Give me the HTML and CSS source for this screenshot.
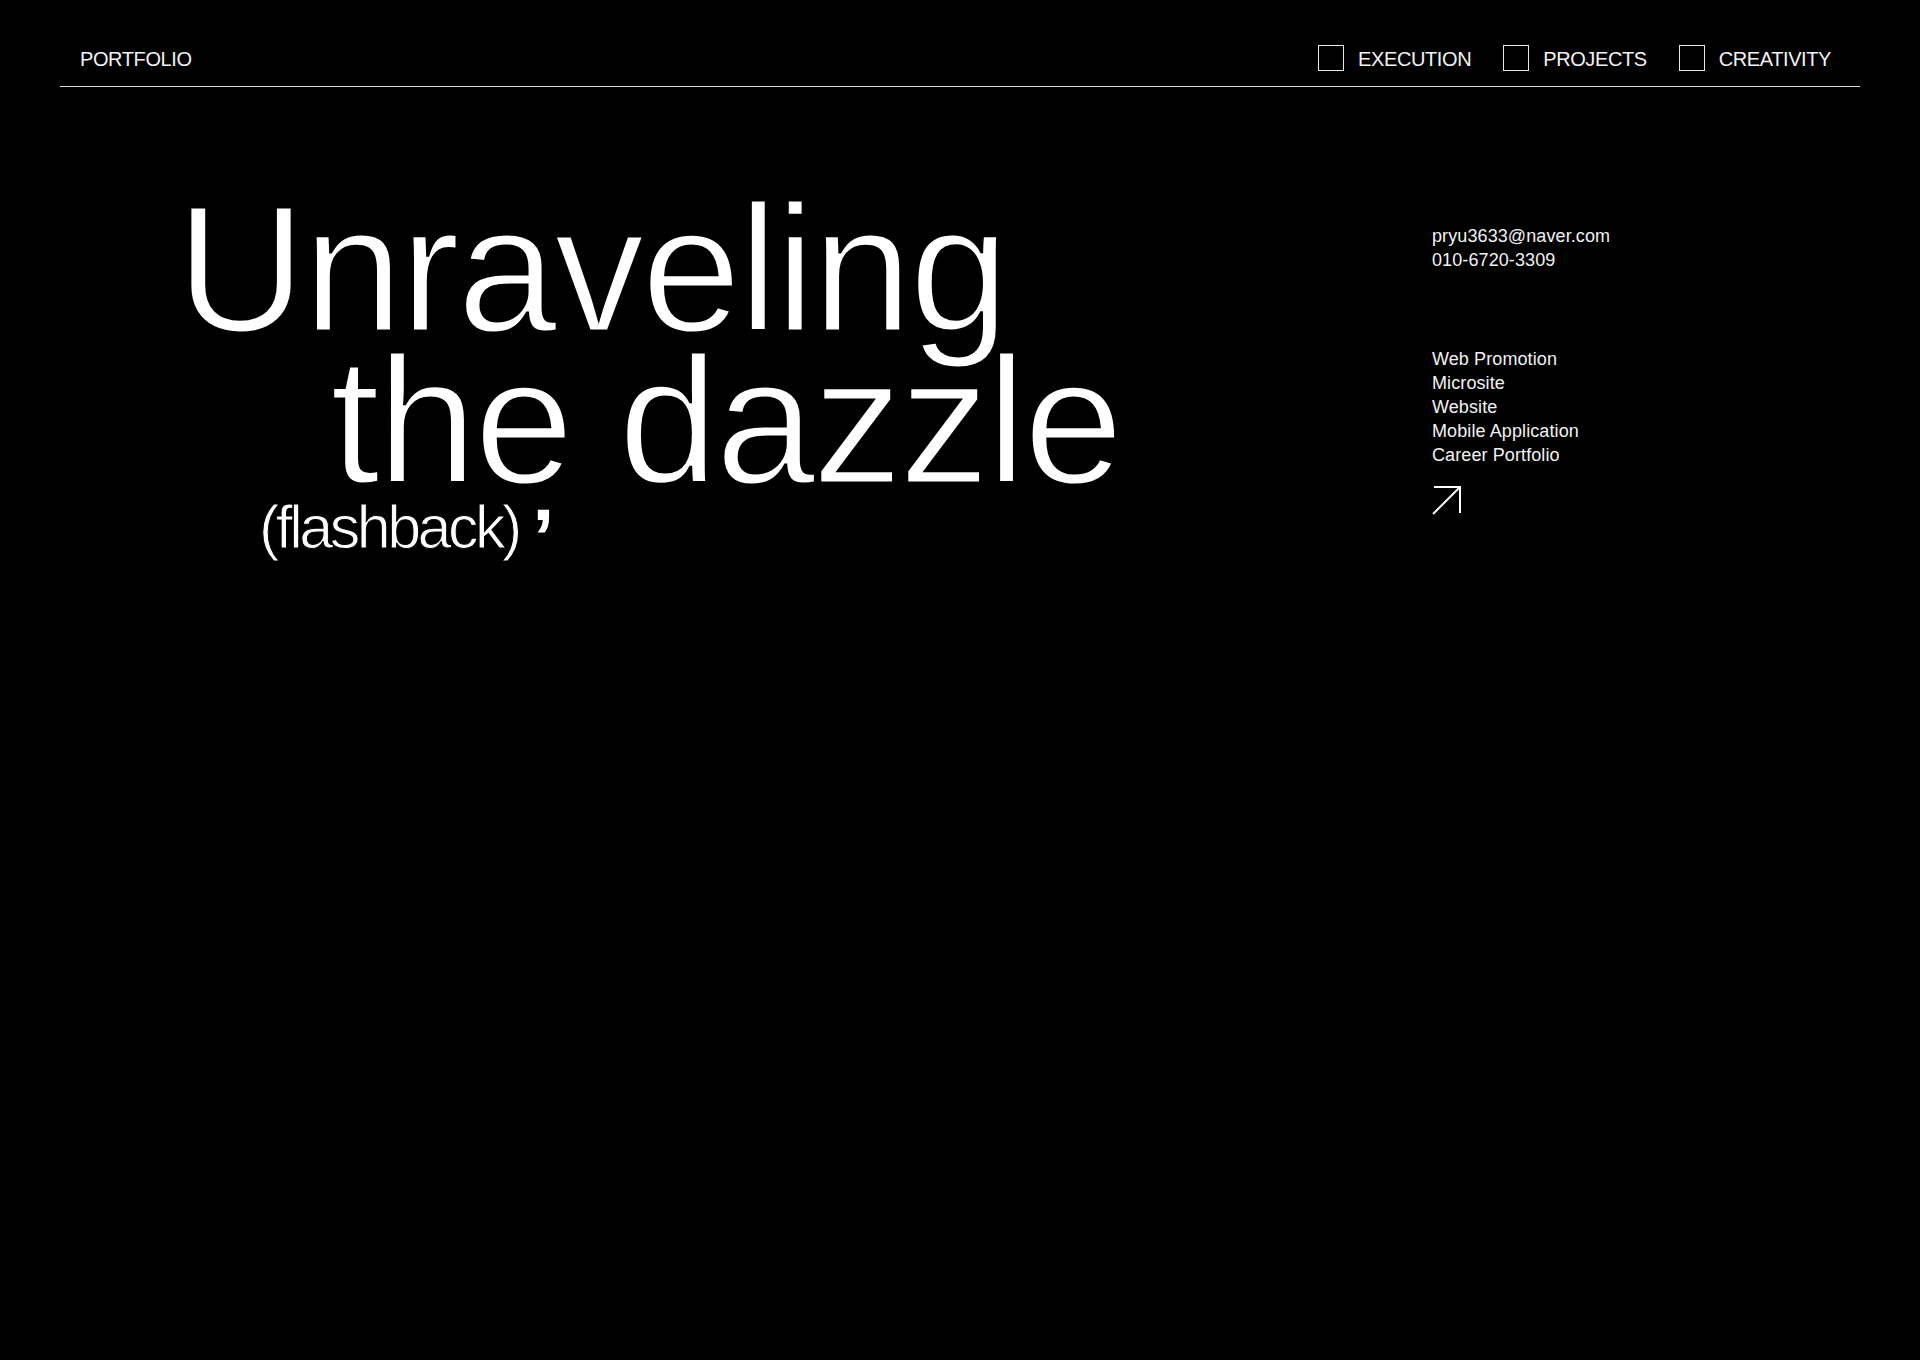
FILE: index.html
```html
<!DOCTYPE html>
<html lang="en">
<head>
<meta charset="utf-8">
<title>Portfolio</title>
<link rel="stylesheet" href="styles.css">
</head>
<body>
<header class="topbar">
  <div class="brand">PORTFOLIO</div>
  <nav class="nav">
    <label class="nav-item"><span class="nav-box"></span><span class="nav-label">EXECUTION</span></label>
    <label class="nav-item"><span class="nav-box"></span><span class="nav-label">PROJECTS</span></label>
    <label class="nav-item"><span class="nav-box"></span><span class="nav-label">CREATIVITY</span></label>
  </nav>
</header>
<main class="hero">
  <h1 class="title">
    <span class="title-line">Unraveling</span>
    <span class="title-line title-line-indent">the dazzle</span>
    <span class="title-sub">(flashback) <span class="title-quote">’</span></span>
  </h1>
  <aside class="info">
    <p class="contact">pryu3633@naver.com<br>010-6720-3309</p>
    <ul class="services">
      <li>Web Promotion</li>
      <li>Microsite</li>
      <li>Website</li>
      <li>Mobile Application</li>
      <li>Career Portfolio</li>
    </ul>
    <a class="arrow" href="#" aria-label="Open">
      <svg width="30" height="30" viewBox="0 0 30 30" fill="none" stroke="#fff" stroke-width="2">
        <path d="M1 29 L28 2"/>
        <path d="M2 2 H28 V28"/>
      </svg>
    </a>
  </aside>
</main>
</body>
</html>
```

FILE: styles.css
```css
* {
  box-sizing: border-box;
}

html, body {
  margin: 0;
  padding: 0;
  background: #000;
}

body {
  width: 1920px;
  min-height: 1360px;
  color: #fff;
  font-family: "Liberation Sans", Arial, Helvetica, sans-serif;
}

.topbar {
  margin: 0 60px;
  padding: 43px 29px 14px 20px;
  display: flex;
  align-items: center;
  justify-content: space-between;
  border-bottom: 1px solid #d6d6d6;
}

.brand,
.nav-label {
  font-size: 20px;
  line-height: 26px;
  padding-top: 3px;
  letter-spacing: -0.4px;
  color: #f2f2f2;
}

.nav {
  display: flex;
  align-items: center;
  gap: 32px;
}

.nav-item {
  display: flex;
  align-items: center;
  gap: 14px;
}

.nav-box {
  width: 26px;
  height: 26px;
  border: 1.5px solid #e8e8e8;
}

.hero {
  display: grid;
  grid-template-columns: 1fr 488px;
  padding-left: 176px;
}

.title {
  margin: 106px 0 0;
  font-weight: 400;
  font-size: 180px;
  line-height: 152px;
  letter-spacing: -3px;
  -webkit-text-stroke: 3px #000;
}

.title-line {
  display: block;
  white-space: nowrap;
}

.title-line-indent {
  margin-left: 154px;
}

.title-sub {
  display: block;
  margin-left: 83px;
  font-size: 61px;
  line-height: 61px;
  letter-spacing: -3.5px;
  -webkit-text-stroke: 1px #000;
}

.title-quote {
  font-size: 80px;
  line-height: 0;
  font-weight: 700;
  letter-spacing: 0;
  vertical-align: -17px;
  -webkit-text-stroke: 0;
}

.info {
  margin-top: 137px;
  font-size: 18px;
  line-height: 24px;
  letter-spacing: 0.1px;
  color: #f2f2f2;
}

.contact {
  margin: 0;
}

.services {
  list-style: none;
  margin: 75px 0 0;
  padding: 0;
}

.arrow {
  display: block;
  width: 30px;
  height: 30px;
  margin-top: 18px;
}

.arrow svg {
  display: block;
}
```
